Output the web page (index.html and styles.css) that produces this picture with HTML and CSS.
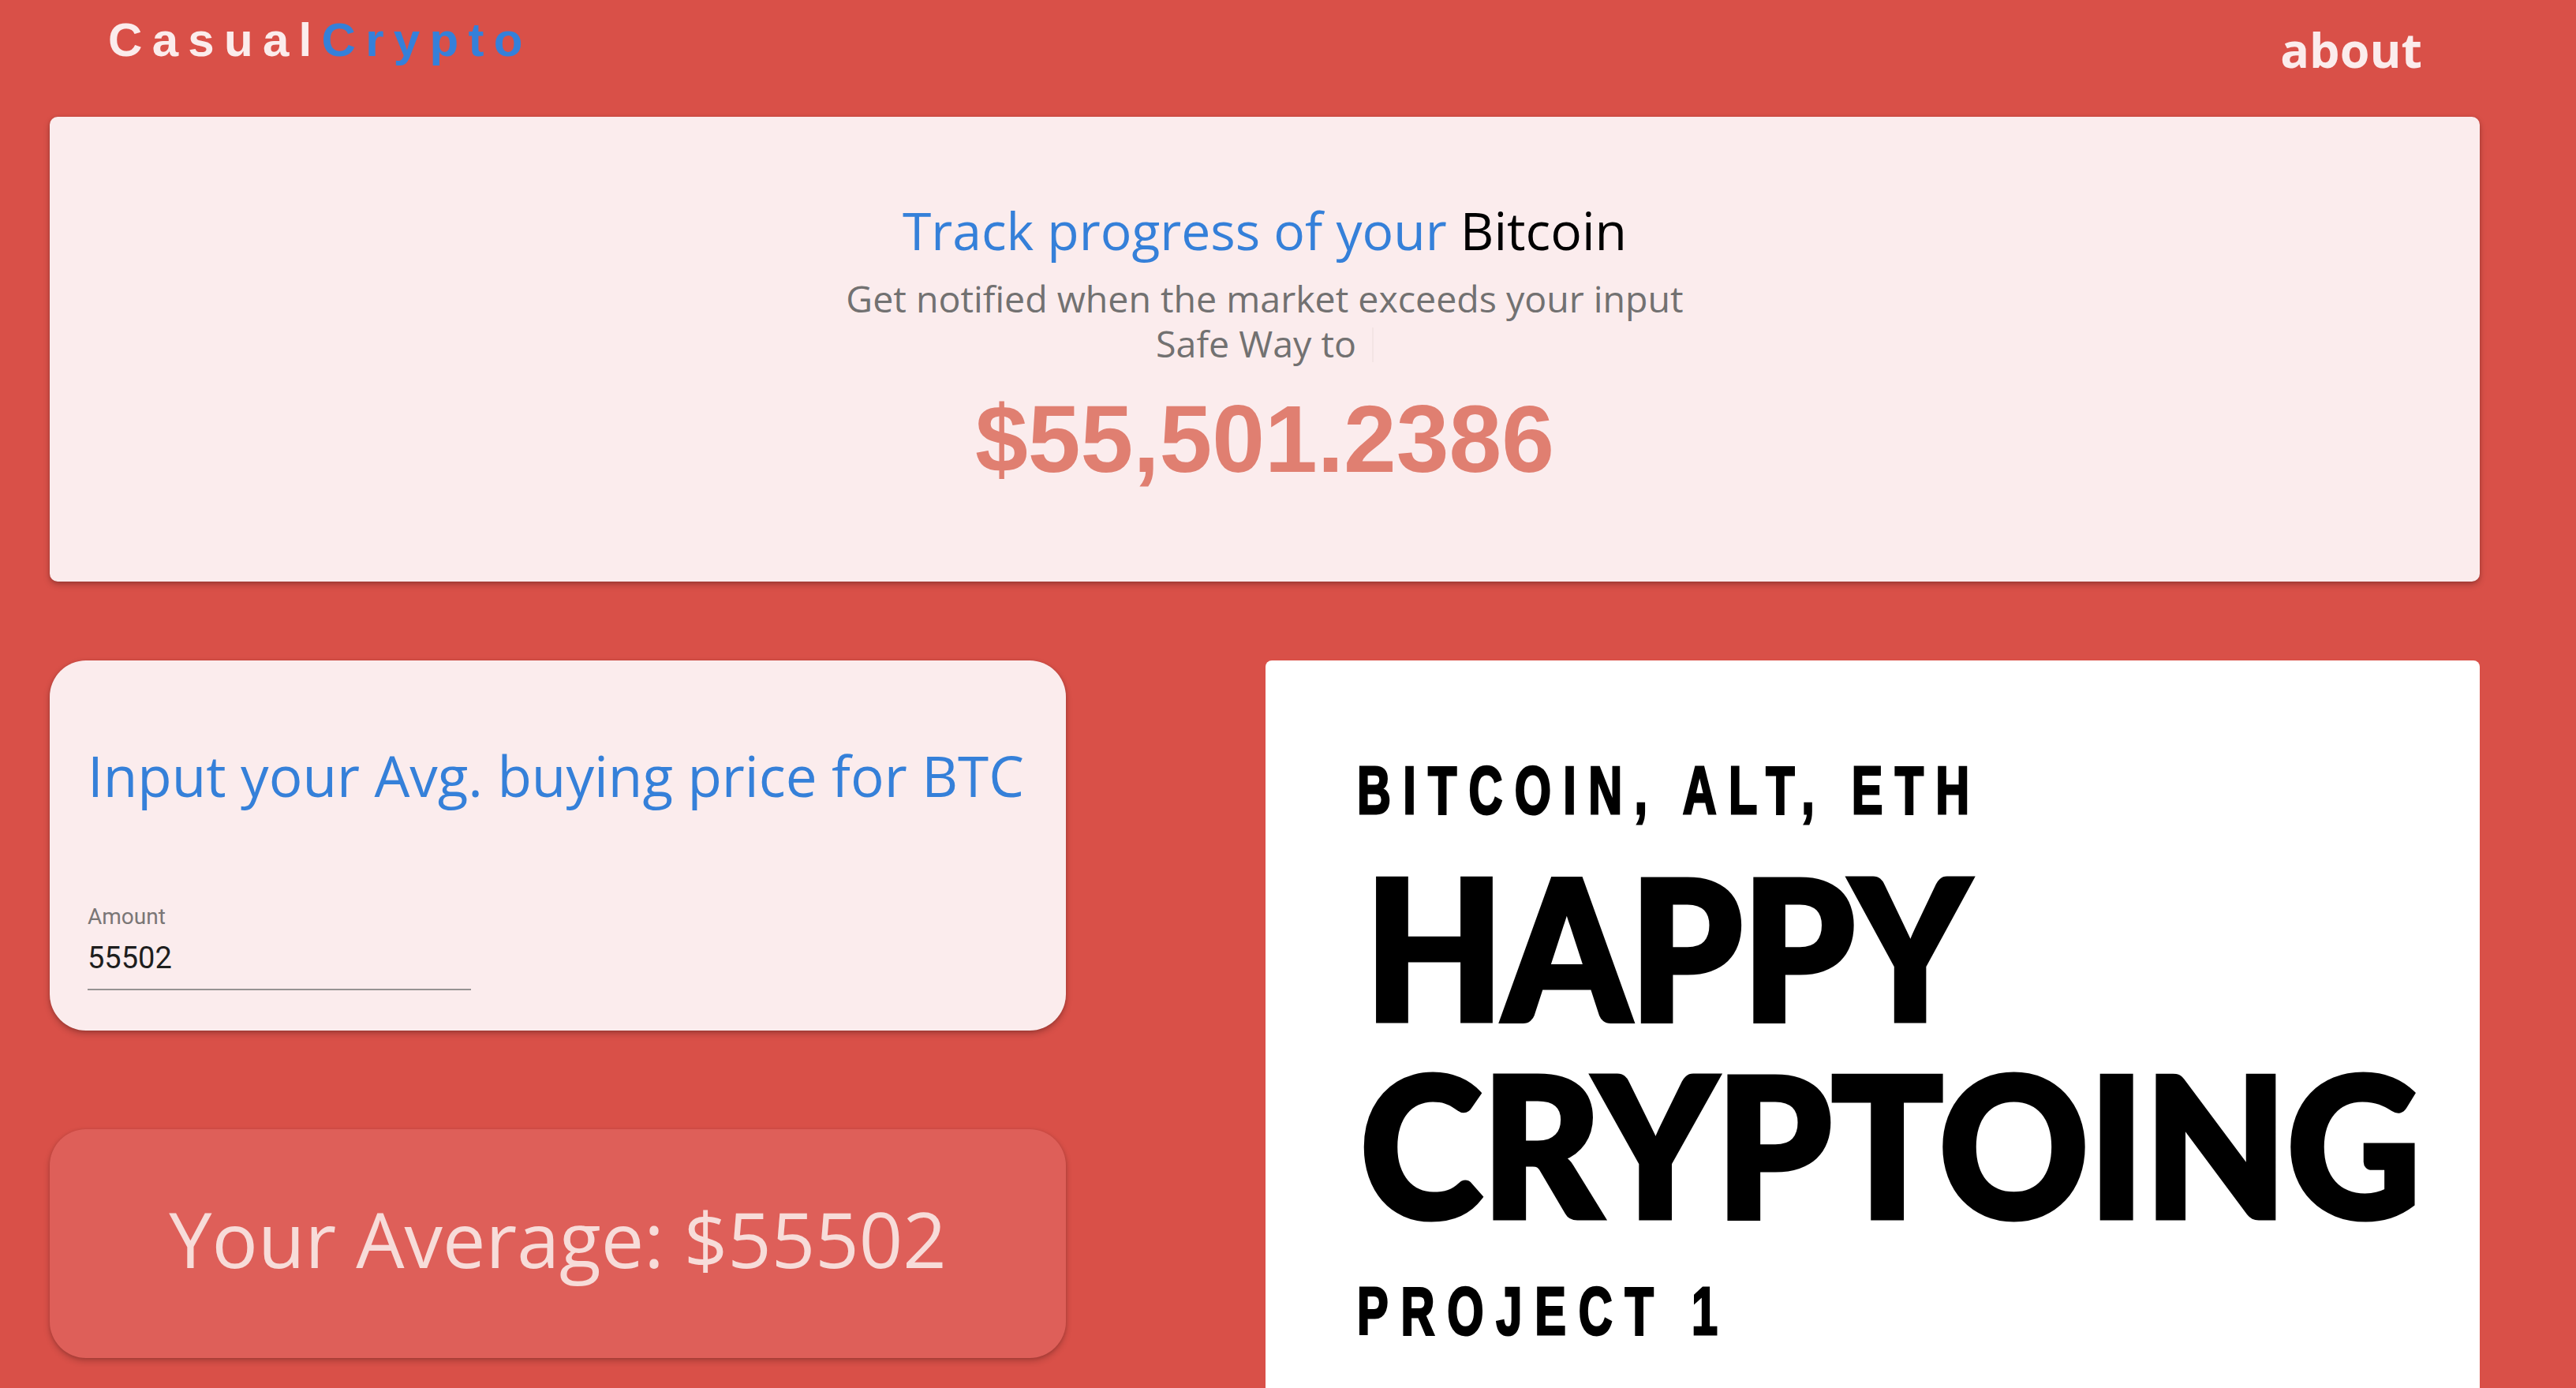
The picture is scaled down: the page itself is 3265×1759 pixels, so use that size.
FILE: index.html
```html
<!DOCTYPE html>
<html lang="en">
<head>
<meta charset="utf-8">
<title>CasualCrypto</title>
<link rel="stylesheet" href="styles.css">
</head>
<body>
<header class="topbar">
  <div class="logo"><span class="logo-a">Casual</span><span class="logo-b">Crypto</span></div>
  <a class="about" href="#">about</a>
</header>
<main class="page">
  <section class="hero card-pink">
    <h1 class="hero-title"><span class="blue">Track progress of your</span> Bitcoin</h1>
    <p class="hero-sub">Get notified when the market exceeds your input<br>Safe Way to<span class="cursor"></span></p>
    <div class="price">$55,501.2386</div>
  </section>
  <div class="grid">
    <div class="left-col">
      <section class="input-card card-pink">
        <h2 class="input-title">Input your Avg. buying price for BTC</h2>
        <div class="field">
          <label class="field-label" for="amt">Amount</label>
          <input class="field-input" id="amt" type="text" value="55502">
        </div>
      </section>
      <section class="avg-card">
        <div class="avg-text">Your Average: $55502</div>
      </section>
    </div>
    <section class="promo-card">
      <svg class="promo-svg" viewBox="0 0 1539 1000" width="1539" height="1000">
        <g transform="translate(116,194) scale(0.7,1)">
          <text class="promo-small" x="0" y="0" textLength="1109" lengthAdjust="spacing">BITCOIN, ALT, ETH</text>
        </g>
        <text class="promo-big" x="126" y="456" textLength="766" lengthAdjust="spacingAndGlyphs">HAPPY</text>
        <text class="promo-big" x="120" y="706" textLength="1344" lengthAdjust="spacingAndGlyphs">CRYPTOING</text>
        <g transform="translate(116,854) scale(0.7,1)">
          <text class="promo-small" x="0" y="0" textLength="653" lengthAdjust="spacing">PROJECT 1</text>
        </g>
      </svg>
    </section>
  </div>
</main>
</body>
</html>
```
FILE: styles.css
```css
html, body {
  margin: 0;
  padding: 0;
}
body {
  background: #d95048;
  font-family: "Open Sans", "Noto Sans", sans-serif;
  min-height: 100vh;
}
.topbar {
  height: 148px;
  display: flex;
  justify-content: space-between;
  align-items: flex-start;
  padding: 0 195px 0 137px;
  box-sizing: border-box;
}
.logo {
  margin-top: 16px;
  font-family: "Liberation Sans", Arial, sans-serif;
  font-weight: 700;
  font-size: 60px;
  line-height: 70px;
  letter-spacing: 12.3px;
}
.logo-a { color: #fbecec; }
.logo-b { color: #3580d9; }
.about {
  margin-top: 27px;
  font-family: "Open Sans", sans-serif;
  font-weight: 700;
  font-size: 61px;
  line-height: 72px;
  color: #fbecec;
  text-decoration: none;
}
.page {
  padding: 0 122px 0 63px;
}
.card-pink {
  background: #fbeced;
}
.hero {
  border-radius: 10px;
  padding: 103px 0 111px;
  text-align: center;
  box-shadow: 0 4px 8px rgba(0,0,0,0.22), 0 1px 4px rgba(0,0,0,0.14);
}
.hero-title {
  margin: 0;
  font-weight: 400;
  font-size: 66px;
  line-height: 80px;
  color: #000;
}
.blue { color: #3580d9; }
.hero-sub {
  margin: 19px 0 0;
  font-size: 46.5px;
  line-height: 57px;
  color: #727171;
}
.cursor {
  display: inline-block;
  width: 2px;
  height: 44px;
  margin-left: 20px;
  vertical-align: -6px;
  background: #f3e4e4;
}
.price {
  margin-top: 22px;
  font-family: "Liberation Sans", Arial, sans-serif;
  font-weight: 700;
  font-size: 120px;
  line-height: 140px;
  color: #e07f71;
}
.grid {
  margin-top: 100px;
  display: grid;
  grid-template-columns: 1288px 1539px;
  column-gap: 253px;
  align-items: start;
}
.left-col {
  display: flex;
  flex-direction: column;
  gap: 125px;
}
.input-card {
  border-radius: 46px;
  padding: 104px 40px 51px 48px;
  box-shadow: 0 4px 8px rgba(0,0,0,0.22), 0 1px 4px rgba(0,0,0,0.14);
}
.input-title {
  margin: 0;
  font-weight: 400;
  font-size: 71px;
  line-height: 84px;
  color: #3580d9;
  white-space: nowrap;
}
.field {
  margin-top: 120px;
  width: 486px;
  display: flex;
  flex-direction: column;
  border-bottom: 2px solid #979393;
  padding-bottom: 16px;
}
.field-label {
  font-family: Roboto, "Liberation Sans", sans-serif;
  font-size: 28px;
  line-height: 34px;
  color: #7a7676;
}
.field-input {
  margin-top: 12px;
  border: 0;
  padding: 0;
  background: transparent;
  font-family: Roboto, "Liberation Sans", sans-serif;
  font-size: 38px;
  line-height: 46px;
  height: 46px;
  color: #1e1e1e;
  outline: none;
}
.avg-card {
  background: #de5f59;
  border-radius: 46px;
  padding: 79px 0 93px;
  text-align: center;
  box-shadow: 0 4px 8px rgba(0,0,0,0.2), 0 1px 4px rgba(0,0,0,0.12);
}
.avg-text {
  font-size: 97px;
  line-height: 118px;
  color: #f7dcd9;
}
.promo-card {
  background: #ffffff;
  border-radius: 8px;
  height: 1000px;
  overflow: hidden;
}
.promo-svg {
  display: block;
}
.promo-small {
  font-family: "Liberation Sans", Arial, sans-serif;
  font-weight: 700;
  font-size: 85px;
  fill: #000;
  stroke: #000;
  stroke-width: 3px;
}
.promo-big {
  font-family: Lato, "Liberation Sans", sans-serif;
  font-weight: 900;
  font-size: 247px;
  fill: #000;
  stroke: #000;
  stroke-width: 7px;
  stroke-linejoin: miter;
}
```
